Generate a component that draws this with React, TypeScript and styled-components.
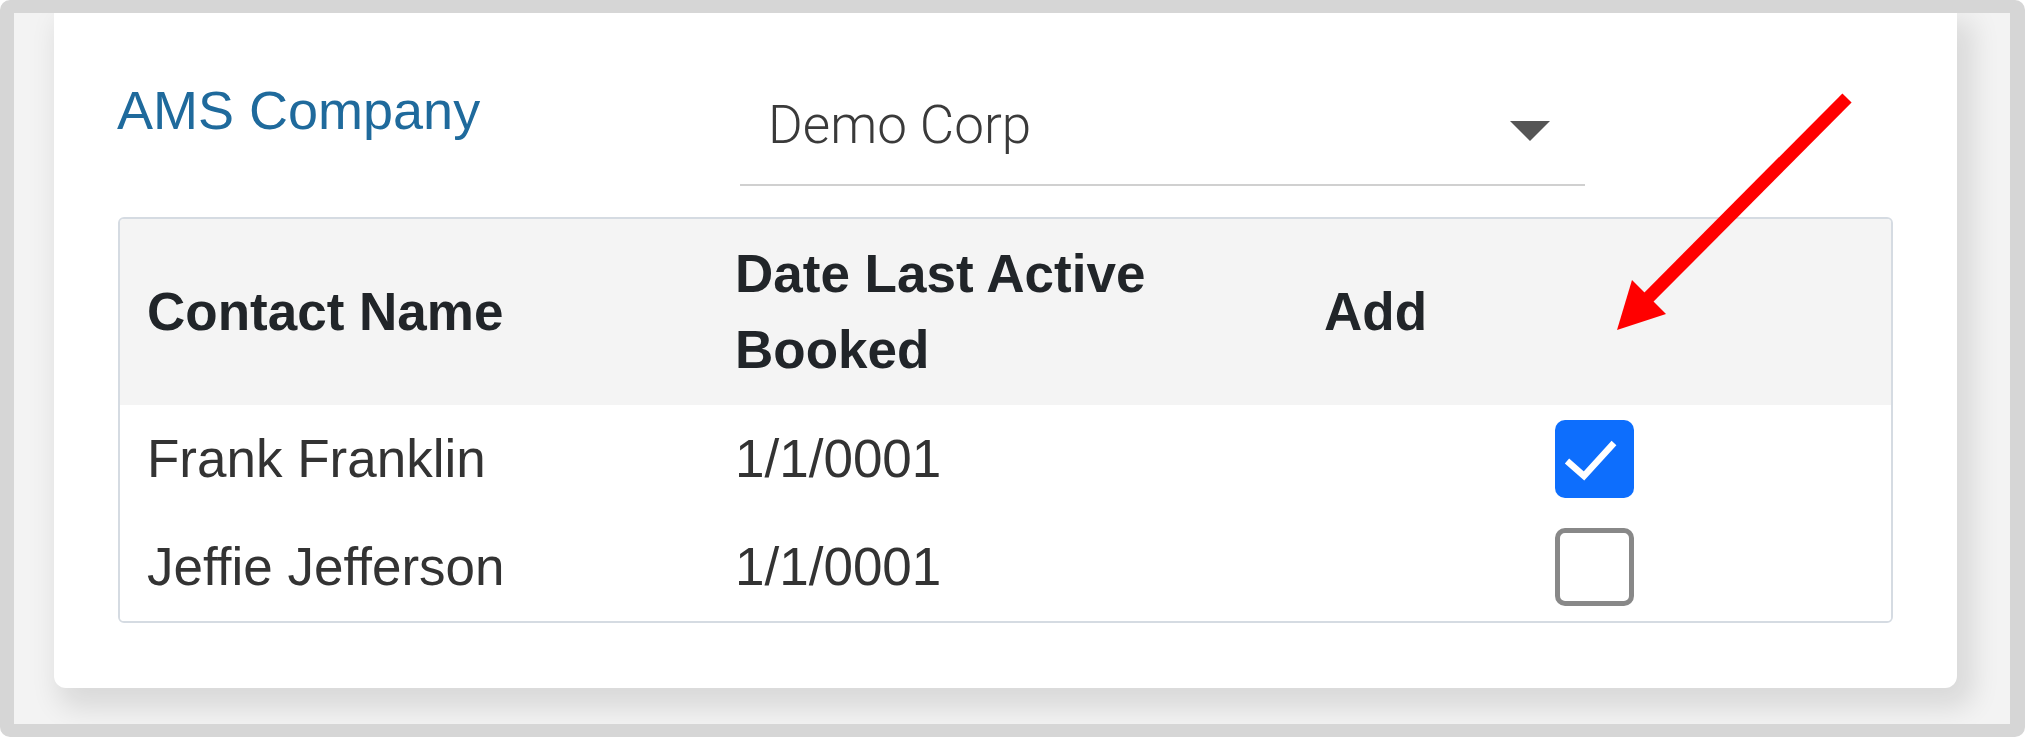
import { createGlobalStyle, styled } from 'styled-components';

type Contact = {
  name: string;
  lastActive: string;
  added: boolean;
};

const contacts: Contact[] = [
  { name: 'Frank Franklin', lastActive: '1/1/0001', added: true },
  { name: 'Jeffie Jefferson', lastActive: '1/1/0001', added: false },
];

const GlobalStyle = createGlobalStyle`
  html,
  body {
    margin: 0;
    padding: 0;
    background: #ffffff;
  }

  body {
    font-family: 'Liberation Sans', Arial, Helvetica, sans-serif;
  }
`;

const App = () => {
  return (
    <Page>
      <GlobalStyle />
      <Frame>
        <Card>
          <CompanyRow>
            <Label>AMS Company</Label>
            <Select>
              <SelectValue>Demo Corp</SelectValue>
              <Caret />
            </Select>
          </CompanyRow>

          <TableWrap>
            <Table>
              <colgroup>
                <col style={{ width: 588 }} />
                <col style={{ width: 589 }} />
                <col />
              </colgroup>
              <thead>
                <tr>
                  <HeadCell>Contact Name</HeadCell>
                  <HeadCell>Date Last Active Booked</HeadCell>
                  <HeadCell>Add</HeadCell>
                </tr>
              </thead>
              <tbody>
                {contacts.map((contact) => (
                  <tr key={contact.name}>
                    <Cell>{contact.name}</Cell>
                    <Cell>{contact.lastActive}</Cell>
                    <Cell $center>
                      <CheckBox $checked={contact.added}>
                        {contact.added && (
                          <svg width="79" height="78" viewBox="0 0 79 78">
                            <polyline
                              points="12,41 29,56 59,23"
                              fill="none"
                              stroke="#ffffff"
                              strokeWidth="6.5"
                            />
                          </svg>
                        )}
                      </CheckBox>
                    </Cell>
                  </tr>
                ))}
              </tbody>
            </Table>
          </TableWrap>
        </Card>
      </Frame>

      <Annotation viewBox="0 0 2025 737">
        <line x1="1847" y1="98" x2="1648" y2="298" stroke="#ff0000" strokeWidth="13" />
        <polygon points="1617,330 1666,314 1632,280" fill="#ff0000" />
      </Annotation>
    </Page>
  );
};

export default App;

const Page = styled.div`
  position: relative;
  width: 2025px;
  height: 737px;
  overflow: hidden;
`;

const Frame = styled.div`
  box-sizing: border-box;
  width: 2025px;
  height: 737px;
  padding: 0 53px 0 40px;
  border-style: solid;
  border-color: #d6d6d6;
  border-width: 13px 15px 13px 14px;
  border-radius: 10px;
  background: #f3f3f3;
  overflow: hidden;
`;

const Card = styled.section`
  height: 675px;
  background: #ffffff;
  border-radius: 0 0 12px 12px;
  box-shadow: 10px 14px 28px 6px rgba(0, 0, 0, 0.11);
`;

const CompanyRow = styled.div`
  display: grid;
  grid-template-columns: 623px 845px;
  padding: 66px 0 0 63px;
`;

const Label = styled.div`
  font-size: 54px;
  line-height: 62px;
  color: #1f6a9c;
`;

const Select = styled.div`
  display: flex;
  align-items: flex-start;
  margin-top: 15px;
  padding: 0 35px 28px 28px;
  border-bottom: 2px solid #d0d0d0;
`;

const SelectValue = styled.span`
  flex: 1;
  font-family: Roboto, 'Liberation Sans', sans-serif;
  font-size: 53px;
  font-weight: 300;
  line-height: 62px;
  color: #3a3a3a;
`;

const Caret = styled.span`
  width: 0;
  height: 0;
  margin-top: 27px;
  border-top: 20px solid #555555;
  border-right: 20px solid transparent;
  border-left: 20px solid transparent;
`;

const TableWrap = styled.div`
  overflow: hidden;
  margin: 31px 64px 0 64px;
  border: 2px solid #d5dbe2;
  border-radius: 6px;
`;

const Table = styled.table`
  width: 100%;
  border-collapse: collapse;
  border-spacing: 0;
  table-layout: fixed;
`;

const HeadCell = styled.th`
  padding: 17px 27px;
  font-size: 53px;
  font-weight: 700;
  line-height: 76px;
  color: #212529;
  text-align: left;
  vertical-align: middle;
  background: #f4f4f4;
`;

const Cell = styled.td<{ $center?: boolean }>`
  height: 108px;
  padding: 0 27px;
  font-size: 53px;
  line-height: 76px;
  color: #333333;
  text-align: ${({ $center }) => ($center ? 'center' : 'left')};
  vertical-align: middle;
  background: #ffffff;
`;

const CheckBox = styled.span<{ $checked: boolean }>`
  box-sizing: border-box;
  display: block;
  width: 79px;
  height: 78px;
  margin: 0 auto;
  border: ${({ $checked }) => ($checked ? '0' : '5px solid #888888')};
  border-radius: 10px;
  background: ${({ $checked }) => ($checked ? '#0d6efd' : '#ffffff')};

  svg {
    display: block;
  }
`;

const Annotation = styled.svg`
  position: absolute;
  top: 0;
  left: 0;
  width: 2025px;
  height: 737px;
  pointer-events: none;
`;
